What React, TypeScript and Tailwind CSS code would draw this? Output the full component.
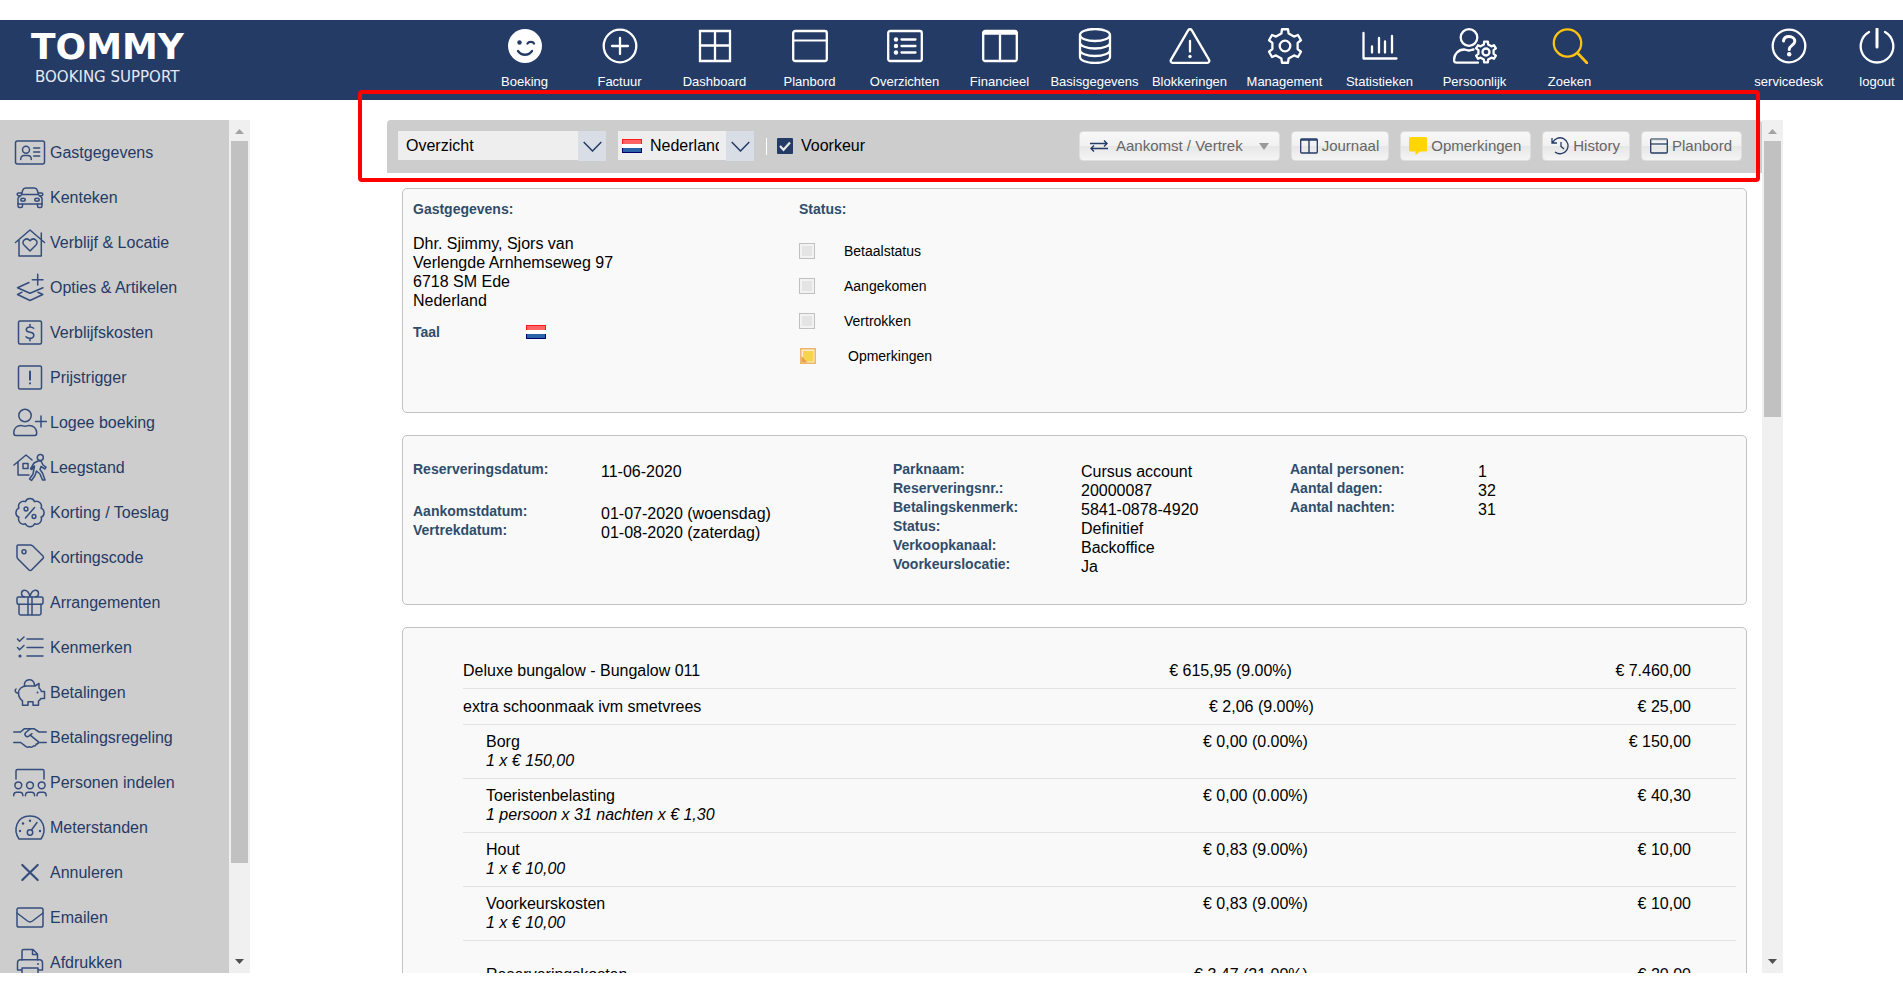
import { useState, type ReactNode } from 'react';

// outline of a cog with trapezoid teeth, first tooth pointing up
const gearPath = (cx: number, cy: number, outer: number, inner: number, teeth = 6) => {
  const step = (Math.PI * 2) / teeth;
  const pts: string[] = [];
  for (let i = 0; i < teeth; i++) {
    const a = i * step - Math.PI / 2;
    const corners = [[-0.27, inner], [-0.17, outer], [0.17, outer], [0.27, inner]];
    corners.forEach(([t, r]) => {
      pts.push(`${(cx + r * Math.cos(a + t * step)).toFixed(2)} ${(cy + r * Math.sin(a + t * step)).toFixed(2)}`);
    });
  }
  return `M${pts.join('L')}Z`;
};

const scallopPath = (cx: number, cy: number, r: number, n = 8) => {
  const pt = (i: number) => {
    const a = ((i + 0.5) * Math.PI * 2) / n - Math.PI / 2;
    return `${(cx + r * Math.cos(a)).toFixed(2)} ${(cy + r * Math.sin(a)).toFixed(2)}`;
  };
  let d = `M${pt(0)}`;
  for (let i = 1; i <= n; i++) d += `A5 5 0 0 1 ${pt(i)}`;
  return `${d}Z`;
};

function NavIcon({ children, wide }: { children: ReactNode; wide?: boolean }) {
  return (
    <svg className={wide ? 'h-9 w-11' : 'h-9 w-9'} viewBox={wide ? '0 0 44 36' : '0 0 36 36'} fill="none" stroke="currentColor" strokeWidth="2.3" strokeLinecap="round" strokeLinejoin="round" aria-hidden="true">
      {children}
    </svg>
  );
}

function SideIcon({ children }: { children: ReactNode }) {
  return (
    <svg className="h-[34px] w-[34px] shrink-0 text-[#344d7d]" viewBox="0 0 34 34" fill="none" stroke="currentColor" strokeWidth="1.5" strokeLinecap="round" strokeLinejoin="round" aria-hidden="true">
      {children}
    </svg>
  );
}

const navItems = [
  {
    label: 'Boeking',
    icon: (
      <NavIcon>
        <circle cx="18" cy="18" r="17" fill="currentColor" stroke="none" />
        <g stroke="#243b66">
          <circle cx="12.5" cy="14.5" r="2.2" fill="#243b66" stroke="none" />
          <path d="M20.5 15.5c1.2-2.2 5.4-2.2 6.5 0M11 23c3.5 5 10.5 5 14 0" />
        </g>
      </NavIcon>
    ),
  },
  { label: 'Factuur', icon: <NavIcon><circle cx="18" cy="18" r="16.3" /><path d="M18 10v16M10 18h16" /></NavIcon> },
  { label: 'Dashboard', icon: <NavIcon><path d="M3 3h30v30H3zM18 3v30M3 17.5h30" strokeLinejoin="miter" /></NavIcon> },
  { label: 'Planbord', icon: <NavIcon><rect x="1.2" y="3" width="33.6" height="30" rx="2" /><path d="M1 12.5h34" strokeWidth="1.8" /></NavIcon> },
  {
    label: 'Overzichten',
    icon: (
      <NavIcon>
        <rect x="1.2" y="3" width="33.6" height="30" rx="2" />
        <path d="M14.5 11.5h14M14.5 18h14M14.5 24.5h14" />
        <g fill="currentColor" stroke="none"><circle cx="9" cy="11.5" r="2.2" /><circle cx="9" cy="18" r="2.2" /><circle cx="9" cy="24.5" r="2.2" /></g>
      </NavIcon>
    ),
  },
  { label: 'Financieel', icon: <NavIcon><rect x="1.2" y="3" width="33.6" height="30" rx="2" /><path d="M2 5h32" strokeWidth="3.5" /><path d="M18 5v28" /></NavIcon> },
  {
    label: 'Basisgegevens',
    icon: (
      <NavIcon>
        <ellipse cx="18" cy="7" rx="15" ry="6" />
        <path d="M3 7v22c0 3.3 6.7 6 15 6s15-2.7 15-6V7M3 14.5c0 3.3 6.7 6 15 6s15-2.7 15-6M3 22c0 3.3 6.7 6 15 6s15-2.7 15-6" />
      </NavIcon>
    ),
  },
  {
    label: 'Blokkeringen',
    icon: (
      <NavIcon wide>
        <path d="M20.3 2.2a2 2 0 0 1 3.4 0l17.4 29.6a2 2 0 0 1-1.7 3H4.6a2 2 0 0 1-1.7-3z" />
        <path d="M22 13v10.5" />
        <circle cx="22" cy="28.5" r="1.7" fill="currentColor" stroke="none" />
      </NavIcon>
    ),
  },
  { label: 'Management', icon: <NavIcon><path d={gearPath(18, 18, 17, 13)} /><circle cx="18" cy="18" r="5.3" /></NavIcon> },
  { label: 'Statistieken', icon: <NavIcon><path d="M1.5 5v25.5h33M10 18.5v6M17 10v14.5M23 13.5v11M30 8v16.5" /></NavIcon> },
  {
    label: 'Persoonlijk',
    icon: (
      <NavIcon wide>
        <circle cx="16" cy="9.5" r="8.3" />
        <path d="M25 34.7H3.5a2.5 2.5 0 0 1-2.5-2.5C1 26 5.5 21.5 11 21.5c2 0 2.8 1 5 1 1.8 0 2.6-.8 4.5-1" />
        <path d={gearPath(33, 24, 10.5, 7.8)} />
        <circle cx="33" cy="24" r="3.5" />
      </NavIcon>
    ),
  },
  { label: 'Zoeken', accent: true, icon: <NavIcon><circle cx="15.5" cy="15" r="13.7" /><path d="M25.5 25l9.5 10" strokeWidth="2.8" /></NavIcon> },
];

const accountItems = [
  {
    label: 'servicedesk',
    icon: (
      <NavIcon>
        <circle cx="18" cy="18" r="16.3" />
        <path d="M12.5 13c.3-3 2.5-4.5 5.5-4.5 3.2 0 5.8 2 5.8 4.8 0 4-5.6 4.2-5.6 8.2" strokeWidth="3" />
        <circle cx="18.2" cy="26.3" r="2.2" fill="currentColor" stroke="none" />
      </NavIcon>
    ),
  },
  { label: 'logout', icon: <NavIcon><path d="M18 1v18" strokeWidth="3" /><path d="M10 4a16.3 16.3 0 1 0 16 0" /></NavIcon> },
];

const sideItems = [
  {
    label: 'Gastgegevens',
    icon: (
      <>
        <rect x="2.5" y="5" width="29" height="23" rx="2" />
        <circle cx="13" cy="13.7" r="3.5" />
        <path d="M7.7 23.5c0-2.5 1.5-4 3.5-4h3.6c2 0 3.5 1.5 3.5 4M20.7 12h6M20.7 16h6M20.7 20h6" />
      </>
    ),
  },
  {
    label: 'Kenteken',
    icon: (
      <>
        <path d="M8.5 13.5l1.2-4.3c.5-1.5 1.5-2.2 3-2.2h8.6c1.5 0 2.5.7 3 2.2l1.2 4.3M8.5 13.5h17M8.3 12H5.5a1.3 1.3 0 0 0 0 2.7h2.3M25.7 12h2.8a1.3 1.3 0 0 1 0 2.7h-2.3" />
        <path d="M7.5 14.5L5 17v6h24v-6l-2.5-2.5" />
        <ellipse cx="10" cy="18.7" rx="2.2" ry="1.5" /><ellipse cx="24" cy="18.7" rx="2.2" ry="1.5" />
        <path d="M5 23v2c0 1 .6 1.5 1.5 1.5H8c1 0 1.5-.6 1.5-1.5v-2M24.5 23v2c0 1 .6 1.5 1.5 1.5h1.5c1 0 1.5-.6 1.5-1.5v-2" />
      </>
    ),
  },
  {
    label: 'Verblijf & Locatie',
    icon: (
      <>
        <path d="M2.5 16.5L17 4l14.5 12.5M6 14v16h22.3V7" />
        <path d="M17 25l-6-6c-3.5-4 2.5-8.5 6-4.3 3.5-4.2 9.5.3 6 4.3z" />
      </>
    ),
  },
  { label: 'Opties & Artikelen', icon: <path d="M16 11.5L4.5 16.7 17 22.2l13-5.5M9 21.2l-4.5 2.3L17 29.5l12.8-6L25 21.2M24.7 3.3V14M19.3 8.7H30" /> },
  {
    label: 'Verblijfskosten',
    icon: (
      <>
        <rect x="5.5" y="5" width="23" height="23" rx="1.5" />
        <path d="M17 8.5V11m0 11.5v2.3M20.7 12.3c-1-1-2.2-1.4-3.7-1.4-4.5 0-5 4.3-1 5.2l2.2.5c4 1 3.3 5.7-1.2 5.7-1.7 0-3-.5-4-1.6" />
      </>
    ),
  },
  { label: 'Prijstrigger', icon: <><rect x="5.5" y="5" width="23" height="23" rx="1.5" /><path d="M17 10.5v8.2M17 22.2v.3" strokeWidth="2" /></> },
  {
    label: 'Logee boeking',
    icon: (
      <>
        <circle cx="12" cy="9.5" r="6.2" />
        <path d="M8 19.5c1.5 0 2.3.8 4 .8s2.5-.8 4-.8c4.5 0 7.7 3 7.7 7.5 0 1.7-.8 2.5-2 2.5H2.8c-1.2 0-2-.8-2-2.5 0-4.5 3-7.5 7.2-7.5zM28 10v11M22.5 15.5h11" />
      </>
    ),
  },
  {
    label: 'Leegstand',
    icon: (
      <>
        <path d="M1 14L13 4l6 5M5 11v13h11M10 12.5h5v5h-5z" />
        <circle cx="27.3" cy="6.5" r="3" />
        <path d="M21 12l4-2h3l2 4 3 2.2-1 1.8-4-2.5-1 3 2.5 3.5 2.5 7h-2.5l-2.5-6-3.5-3-1.5 4.5-3.5 5-2-1.5 3.5-5 1.5-8-1.5 1-1 2.5-1.5-.7z" />
      </>
    ),
  },
  {
    label: 'Korting / Toeslag',
    icon: (
      <>
        <path d={scallopPath(17, 16.7, 12)} />
        <circle cx="13" cy="13" r="1.9" /><circle cx="21" cy="20.5" r="1.9" />
        <path d="M21.5 11.5L12.5 22" />
      </>
    ),
  },
  { label: 'Kortingscode', icon: <><path d="M5 4h12c1.2 0 2 .3 2.8 1L30 15c.7.7.7 1.6 0 2.4L18.5 29c-.8.8-1.7.8-2.5 0L5 18c-.7-.7-1-1.5-1-2.5V5c0-.7.3-1 1-1z" /><circle cx="11" cy="10.7" r="2" /></> },
  {
    label: 'Arrangementen',
    icon: (
      <>
        <rect x="4" y="11" width="26" height="7.3" rx="1.5" />
        <path d="M6 18.3v9c0 1 .5 1.7 1.5 1.7h19c1 0 1.5-.7 1.5-1.7v-9M15 11v18M19 11v18" />
        <path d="M17 10.5C16 6.5 14 4.3 11.5 4.3c-4 0-4 6.5 0 6.5M17 10.5c1-4 3-6.2 5.5-6.2 4 0 4 6.5 0 6.5" />
      </>
    ),
  },
  { label: 'Kenmerken', icon: <><path d="M14 8h16M14 16.5h16M14 25h16M4.5 8l2 2.3L11 6M4.5 16.5l2 2.3 4.5-4.3" /><circle cx="7" cy="25" r="1.6" fill="currentColor" stroke="none" /></> },
  {
    label: 'Betalingen',
    icon: (
      <>
        <path d="M5.5 17c0-4 3.5-7 8-7h8.5l4-2.5v4.5c1.2 1 2 2 2.5 3.5h3v7h-3.5c-.7 1-1.5 1.8-2.5 2.5V29.3h-5.5v-3.5h-5v3.5H9.5v-4.5c-2.5-1.8-4-4.5-4-7.8z" />
        <path d="M11.5 9.5c-1-7 10-8.5 10 0M5.5 17c-3 .3-4.3-2.8-2.5-4" />
        <circle cx="24.5" cy="16.5" r="1" fill="currentColor" stroke="none" />
      </>
    ),
  },
  {
    label: 'Betalingsregeling',
    icon: (
      <>
        <path d="M.7 11h6.8l4-3.3h9.5l5 3.3h7.3M.7 21.5h7L13 25.7c1.5 1 2.5.8 3.5 0 1.7 1 3.2.3 3.7-.7 1.8.3 3-.5 3-2 1.5 0 2.5-1 2.3-2.2l-8-6.5M33.3 21.5H26" />
        <path d="M17.5 7.7l-4.7 3.8c-2.3 2.3.7 5.2 3 3.7l3.2-2.5" />
      </>
    ),
  },
  {
    label: 'Personen indelen',
    icon: (
      <>
        <path d="M3 13V5c0-1 .5-1.5 1.5-1.5h25c1 0 1.5.5 1.5 1.5v8" />
        <circle cx="5.3" cy="19.3" r="3.4" /><circle cx="17" cy="19.3" r="3.4" /><circle cx="28.7" cy="19.3" r="3.4" />
        <path d="M.7 29.7c0-2.2 1.3-3.5 3-3.5h3.2c1.8 0 3 1.3 3 3.5M12.4 29.7c0-2.2 1.3-3.5 3-3.5h3.2c1.8 0 3 1.3 3 3.5M24 29.7c0-2.2 1.3-3.5 3-3.5h3.2c1.8 0 3 1.3 3 3.5" />
      </>
    ),
  },
  {
    label: 'Meterstanden',
    icon: (
      <>
        <path d="M6 28c-6-8.5-3-23 11-23s17 14.5 11 23z" />
        <circle cx="17" cy="21.5" r="2.7" />
        <path d="M18.5 19l5.5-7.5" />
        <g fill="currentColor" stroke="none"><circle cx="17" cy="9.7" r="1.2" /><circle cx="10" cy="12.5" r="1.2" /><circle cx="7" cy="20" r="1.2" /><circle cx="27" cy="20" r="1.2" /></g>
      </>
    ),
  },
  { label: 'Annuleren', icon: <path d="M9.3 9l15.4 15M24.7 9L9.3 24" strokeWidth="2.2" /> },
  { label: 'Emailen', icon: <><rect x="4" y="7" width="26" height="19" rx="1.8" /><path d="M4 12l10.5 8c1.8 1.3 3.2 1.3 5 0L30 12" /></> },
  {
    label: 'Afdrukken',
    icon: (
      <>
        <path d="M9 14V5c0-1 .5-1.5 1.5-1.5H20l4.5 4.5v6M19.5 3.5v5h5" />
        <path d="M9 24H4.5v-7c0-2 1-3.2 3-3.2h19c2 0 3 1.2 3 3.2v7H25M9 22h16v9H9z" />
        <circle cx="25" cy="18" r="1" fill="currentColor" stroke="none" />
      </>
    ),
  },
];

const costs = [
  { name: 'Deluxe bungalow - Bungalow 011', tax: '€ 615,95 (9.00%)', total: '€ 7.460,00', pad: 'pr-6' },
  { name: 'extra schoonmaak ivm smetvrees', tax: '€ 2,06 (9.00%)', total: '€ 25,00', pad: 'pr-0.5' },
  { name: 'Borg', detail: '1 x € 150,00', tax: '€ 0,00 (0.00%)', total: '€ 150,00' },
  { name: 'Toeristenbelasting', detail: '1 persoon x 31 nachten x € 1,30', tax: '€ 0,00 (0.00%)', total: '€ 40,30' },
  { name: 'Hout', detail: '1 x € 10,00', tax: '€ 0,83 (9.00%)', total: '€ 10,00' },
  { name: 'Voorkeurskosten', detail: '1 x € 10,00', tax: '€ 0,83 (9.00%)', total: '€ 10,00' },
];

function Flag() {
  return (
    <svg className="h-3.5 w-5" viewBox="0 0 20 14" role="img" aria-label="Nederlandse vlag">
      <rect width="20" height="5" fill="#ff1a1a" />
      <rect x="1" y="1" width="18" height="4" fill="#ff6464" />
      <rect y="5" width="20" height="4" fill="#fff" />
      <rect y="9" width="20" height="5" fill="#00006e" />
      <rect x="1" y="9" width="18" height="4" fill="#2c62a8" />
    </svg>
  );
}

function SelectArrow() {
  return (
    <span className="pointer-events-none absolute inset-y-0 right-0 flex w-7 items-center justify-center bg-[#d9dee6]">
      <svg className="h-[11px] w-[19px] text-[#243b66]" viewBox="0 0 19 11" fill="none" stroke="currentColor" strokeWidth="1.5" aria-hidden="true">
        <path d="M.7 1l8.8 9L18.3 1" />
      </svg>
    </span>
  );
}

function ScrollBar({ thumb }: { thumb: string }) {
  return (
    <div className="flex w-[21px] shrink-0 flex-col bg-[#f0f0f0]" aria-hidden="true">
      <svg className="h-[21px] w-[21px]" viewBox="0 0 21 21"><path d="M6 14l4.5-5L15 14z" fill="#a3a3a3" /></svg>
      <div className="min-h-0 flex-1"><div className={`mx-0.5 bg-[#c1c1c1] ${thumb}`} /></div>
      <svg className="h-[21px] w-[21px]" viewBox="0 0 21 21"><path d="M6 7l4.5 5L15 7z" fill="#505050" /></svg>
    </div>
  );
}

function ToolButton({ icon, children }: { icon: ReactNode; children: ReactNode }) {
  return (
    <button type="button" className="flex h-[30px] items-center gap-1 rounded-sm border border-[#dedede] bg-[linear-gradient(#f8f8f8,#f1f1f1_50%,#e6e6e6_50%,#f5f5f5)] pr-[9px] pl-2 text-[15px] whitespace-nowrap text-[#666]">
      {icon}
      {children}
    </button>
  );
}

function Field({ label, children }: { label: string; children: ReactNode }) {
  return (
    <div className="flex h-[19px]">
      <dt className="w-[188px] shrink-0 text-sm/4 font-bold text-[#2f4d6b]">{label}</dt>
      <dd className="text-base/[22px]">{children}</dd>
    </div>
  );
}

export default function App() {
  const [preferred, setPreferred] = useState(true);

  return (
    <div className="flex h-screen flex-col bg-white py-5 font-['Liberation_Sans',Arial,sans-serif] text-base text-black">
      <header className="flex h-20 shrink-0 bg-[#243b66] text-white">
        <a href="#home" className="flex w-[477px] shrink-0 flex-col pt-1.5 pl-[31px]">
          <span className="font-['DejaVu_Sans',sans-serif] text-[36px]/[42px] font-bold">TOMMY</span>
          <span className="pl-1 font-['DejaVu_Sans',sans-serif] text-[15px]/[18px] text-[#e4e9f2]">BOOKING SUPPORT</span>
        </a>
        <nav className="flex">
          {navItems.map((item) => (
            <a key={item.label} href={`#${item.label}`} className="flex w-[95px] flex-col items-center gap-2.5 pt-2">
              <span className={item.accent ? 'text-[#ffc20e]' : ''}>{item.icon}</span>
              <span className="text-[13px]/4">{item.label}</span>
            </a>
          ))}
        </nav>
        <nav className="ml-auto flex gap-9 pr-2">
          {accountItems.map((item) => (
            <a key={item.label} href={`#${item.label}`} className="flex flex-col items-center gap-2.5 pt-2">
              {item.icon}
              <span className="text-[13px]/4">{item.label}</span>
            </a>
          ))}
        </nav>
      </header>

      <div className="mt-5 flex min-h-0 flex-1">
        <aside className="flex w-[250px] shrink-0 bg-[#cdcdcd]">
          <ul className="flex-1 overflow-y-auto pt-2.5 [scrollbar-width:none]">
            {sideItems.map((item) => (
              <li key={item.label}>
                <a href={`#${item.label}`} className="flex h-[45px] items-center gap-[3px] pl-[13px] text-[#243b66]">
                  <SideIcon>{item.icon}</SideIcon>
                  {item.label}
                </a>
              </li>
            ))}
          </ul>
          <ScrollBar thumb="h-[89%]" />
        </aside>

        <main className="relative mr-[120px] ml-[137px] flex min-w-0 flex-1">
          <div className="min-w-0 flex-1 overflow-y-auto [scrollbar-width:none]">
            <div className="flex h-[53px] items-center rounded-t bg-[#cdcdcd] pr-5 pb-px pl-[11px]">
              <div className="relative h-[30px]">
                <select aria-label="Weergave" className="block h-[29px] w-[208px] appearance-none bg-[#eee] pr-7 pl-2">
                  <option>Overzicht</option>
                </select>
                <SelectArrow />
              </div>
              <div className="relative ml-3 h-[30px]">
                <span className="pointer-events-none absolute top-2 left-1"><Flag /></span>
                <select aria-label="Taal" className="block h-[29px] w-[136px] appearance-none bg-[#eee] pr-[35px] pl-8">
                  <option>Nederlands</option>
                </select>
                <SelectArrow />
              </div>
              <span className="ml-3 h-[17px] w-px bg-white" />
              <label className="ml-2.5 flex items-center gap-2">
                <span className="relative flex">
                  <input type="checkbox" checked={preferred} onChange={(e) => setPreferred(e.target.checked)} className="h-4 w-4 appearance-none rounded-[1px] bg-white checked:bg-[#243b66]" />
                  <svg className="pointer-events-none absolute inset-0 h-4 w-4" viewBox="0 0 16 16" fill="none" stroke="#e8e8e8" strokeWidth="2.2" aria-hidden="true">
                    <path d="M3 8l3.5 3.8L13 4.5" />
                  </svg>
                </span>
                Voorkeur
              </label>

              <div className="ml-auto flex gap-[11px]">
                <button type="button" className="flex h-[30px] items-center rounded-sm border border-[#dedede] bg-[linear-gradient(#f8f8f8,#f1f1f1_50%,#e6e6e6_50%,#f5f5f5)] px-2.5 text-[15px] whitespace-nowrap text-[#666]">
                  <svg className="mr-2 h-3 w-[18px] text-[#243b66]" viewBox="0 0 18 12" fill="none" stroke="currentColor" strokeWidth="1.4" aria-hidden="true">
                    <path d="M0 3.5h17M14 .5l3 3-3 3M18 8.5H1M4 5.5l-3 3 3 3" />
                  </svg>
                  Aankomst / Vertrek
                  <svg className="ml-4 h-[7px] w-2.5" viewBox="0 0 10 7" fill="#999" aria-hidden="true"><path d="M0 0h10L5 7z" /></svg>
                </button>
                <ToolButton icon={<svg className="h-4 w-[18px]" viewBox="0 0 18 16" fill="none" stroke="#243b66" strokeWidth="1.3" aria-hidden="true"><rect x=".7" y="1" width="16.6" height="14" rx="1" /><path d="M.7 2h16.6M9 2v13" strokeWidth="1.4" /></svg>}>
                  Journaal
                </ToolButton>
                <ToolButton icon={<svg className="h-[18px] w-[18px]" viewBox="0 0 18 18" fill="#ffd600" aria-hidden="true"><path d="M1.5 0h15A1.5 1.5 0 0 1 18 1.5v11.5a1.5 1.5 0 0 1-1.5 1.5H11L6.5 18v-3.5h-5A1.5 1.5 0 0 1 0 13V1.5A1.5 1.5 0 0 1 1.5 0z" /></svg>}>
                  Opmerkingen
                </ToolButton>
                <ToolButton icon={<svg className="h-[18px] w-[18px]" viewBox="0 0 18 18" fill="none" stroke="#243b66" strokeWidth="1.3" aria-hidden="true"><path d="M1 1v5h5M1.5 6A8 8 0 1 1 4 15M10 5v4.5l3 2.5" /></svg>}>
                  History
                </ToolButton>
                <ToolButton icon={<svg className="h-4 w-[18px]" viewBox="0 0 18 16" fill="none" stroke="#243b66" strokeWidth="1.3" aria-hidden="true"><rect x=".7" y="1" width="16.6" height="14" rx="1" /><path d="M1 1.2h16" stroke="#8696a0" strokeWidth="2" /><path d="M.7 6h16.6" /></svg>}>
                  Planbord
                </ToolButton>
              </div>
            </div>

            <div className="flex flex-col gap-[22px] px-[15px] pt-[15px] pb-5">
              <section className="flex min-h-[225px] rounded-[5px] border border-[#c3c3c3] bg-[#f9f9f9] pt-3 pl-2.5">
                <div className="w-[386px]">
                  <h2 className="text-sm/4 font-bold text-[#2f4d6b]">Gastgegevens:</h2>
                  <address className="mt-[17px] text-base/[19px] not-italic">
                    Dhr. Sjimmy, Sjors van<br />
                    Verlengde Arnhemseweg 97<br />
                    6718 SM Ede<br />
                    Nederland
                  </address>
                  <div className="mt-3 flex items-center">
                    <span className="w-[113px] text-sm/5 font-bold text-[#2f4d6b]">Taal</span>
                    <Flag />
                  </div>
                </div>
                <div>
                  <h2 className="text-sm/4 font-bold text-[#2f4d6b]">Status:</h2>
                  <div className="mt-4">
                    {['Betaalstatus', 'Aangekomen', 'Vertrokken'].map((s) => (
                      <label key={s} className="flex h-[35px] items-center gap-[29px] text-sm">
                        <input type="checkbox" className="h-4 w-4 appearance-none border border-[#c0c0c0] bg-[#e4e4e4] shadow-[inset_0_0_0_2px_#f2f2f2] checked:bg-[#243b66]" />
                        {s}
                      </label>
                    ))}
                    <div className="flex h-[35px] items-center gap-8 pl-px text-sm">
                      <svg className="h-4 w-4" viewBox="0 0 16 16" aria-hidden="true">
                        <rect width="16" height="16" fill="#efb56b" />
                        <rect x="1.5" y="1.5" width="13" height="13" fill="#fdf0d0" />
                        <rect x="3" y="3" width="10.5" height="10.5" fill="#f7d44c" />
                        <path d="M1.5 8l6 6.5h-6z" fill="#e9a04c" />
                      </svg>
                      Opmerkingen
                    </div>
                  </div>
                </div>
              </section>

              <section className="grid min-h-[170px] grid-cols-[480fr_397fr_456fr] rounded-[5px] border border-[#c3c3c3] bg-[#f9f9f9] pt-[25px] pl-2.5">
                <dl>
                  <Field label="Reserveringsdatum:">11-06-2020</Field>
                  <div className="mt-[23px]">
                    <Field label="Aankomstdatum:">01-07-2020 (woensdag)</Field>
                    <Field label="Vertrekdatum:">01-08-2020 (zaterdag)</Field>
                  </div>
                </dl>
                <dl>
                  <Field label="Parknaam:">Cursus account</Field>
                  <Field label="Reserveringsnr.:">20000087</Field>
                  <Field label="Betalingskenmerk:">5841-0878-4920</Field>
                  <Field label="Status:">Definitief</Field>
                  <Field label="Verkoopkanaal:">Backoffice</Field>
                  <Field label="Voorkeurslocatie:">Ja</Field>
                </dl>
                <dl>
                  <Field label="Aantal personen:">1</Field>
                  <Field label="Aantal dagen:">32</Field>
                  <Field label="Aantal nachten:">31</Field>
                </dl>
              </section>

              <section className="rounded-[5px] border border-[#c3c3c3] bg-[#f9f9f9] pt-[25px] pr-2.5 pb-10 pl-[60px]">
                <table className="w-full table-fixed text-base/[19px]">
                  <colgroup>
                    <col />
                    <col className="w-[20%]" />
                    <col className="w-[33%]" />
                  </colgroup>
                  <tbody>
                    {costs.map((c) => (
                      <tr key={c.name} className="border-b border-[#e2e2e2] align-top">
                        <td className={c.detail ? 'pt-[7px] pb-2 pl-[23px]' : 'py-2'}>
                          {c.name}
                          {c.detail && <em className="block">{c.detail}</em>}
                        </td>
                        <td className={c.detail ? 'pt-[7px] pr-2 text-right' : `pt-2 text-right ${c.pad}`}>{c.tax}</td>
                        <td className={c.detail ? 'pt-[7px] pr-[45px] text-right' : 'pt-2 pr-[45px] text-right'}>{c.total}</td>
                      </tr>
                    ))}
                    <tr className="align-top">
                      <td className="pt-6 pl-[23px]">Reserveringskosten</td>
                      <td className="pt-6 pr-2 text-right">€ 3,47 (21.00%)</td>
                      <td className="pt-6 pr-[45px] text-right">€ 20,00</td>
                    </tr>
                  </tbody>
                </table>
              </section>
            </div>
          </div>
          <ScrollBar thumb="h-[34%]" />

          {/* highlight around the toolbar */}
          <div className="pointer-events-none absolute -top-[30px] right-[23px] -left-[29px] h-[92px] rounded-sm border-4 border-[#ff0000]" />
        </main>
      </div>
    </div>
  );
}
